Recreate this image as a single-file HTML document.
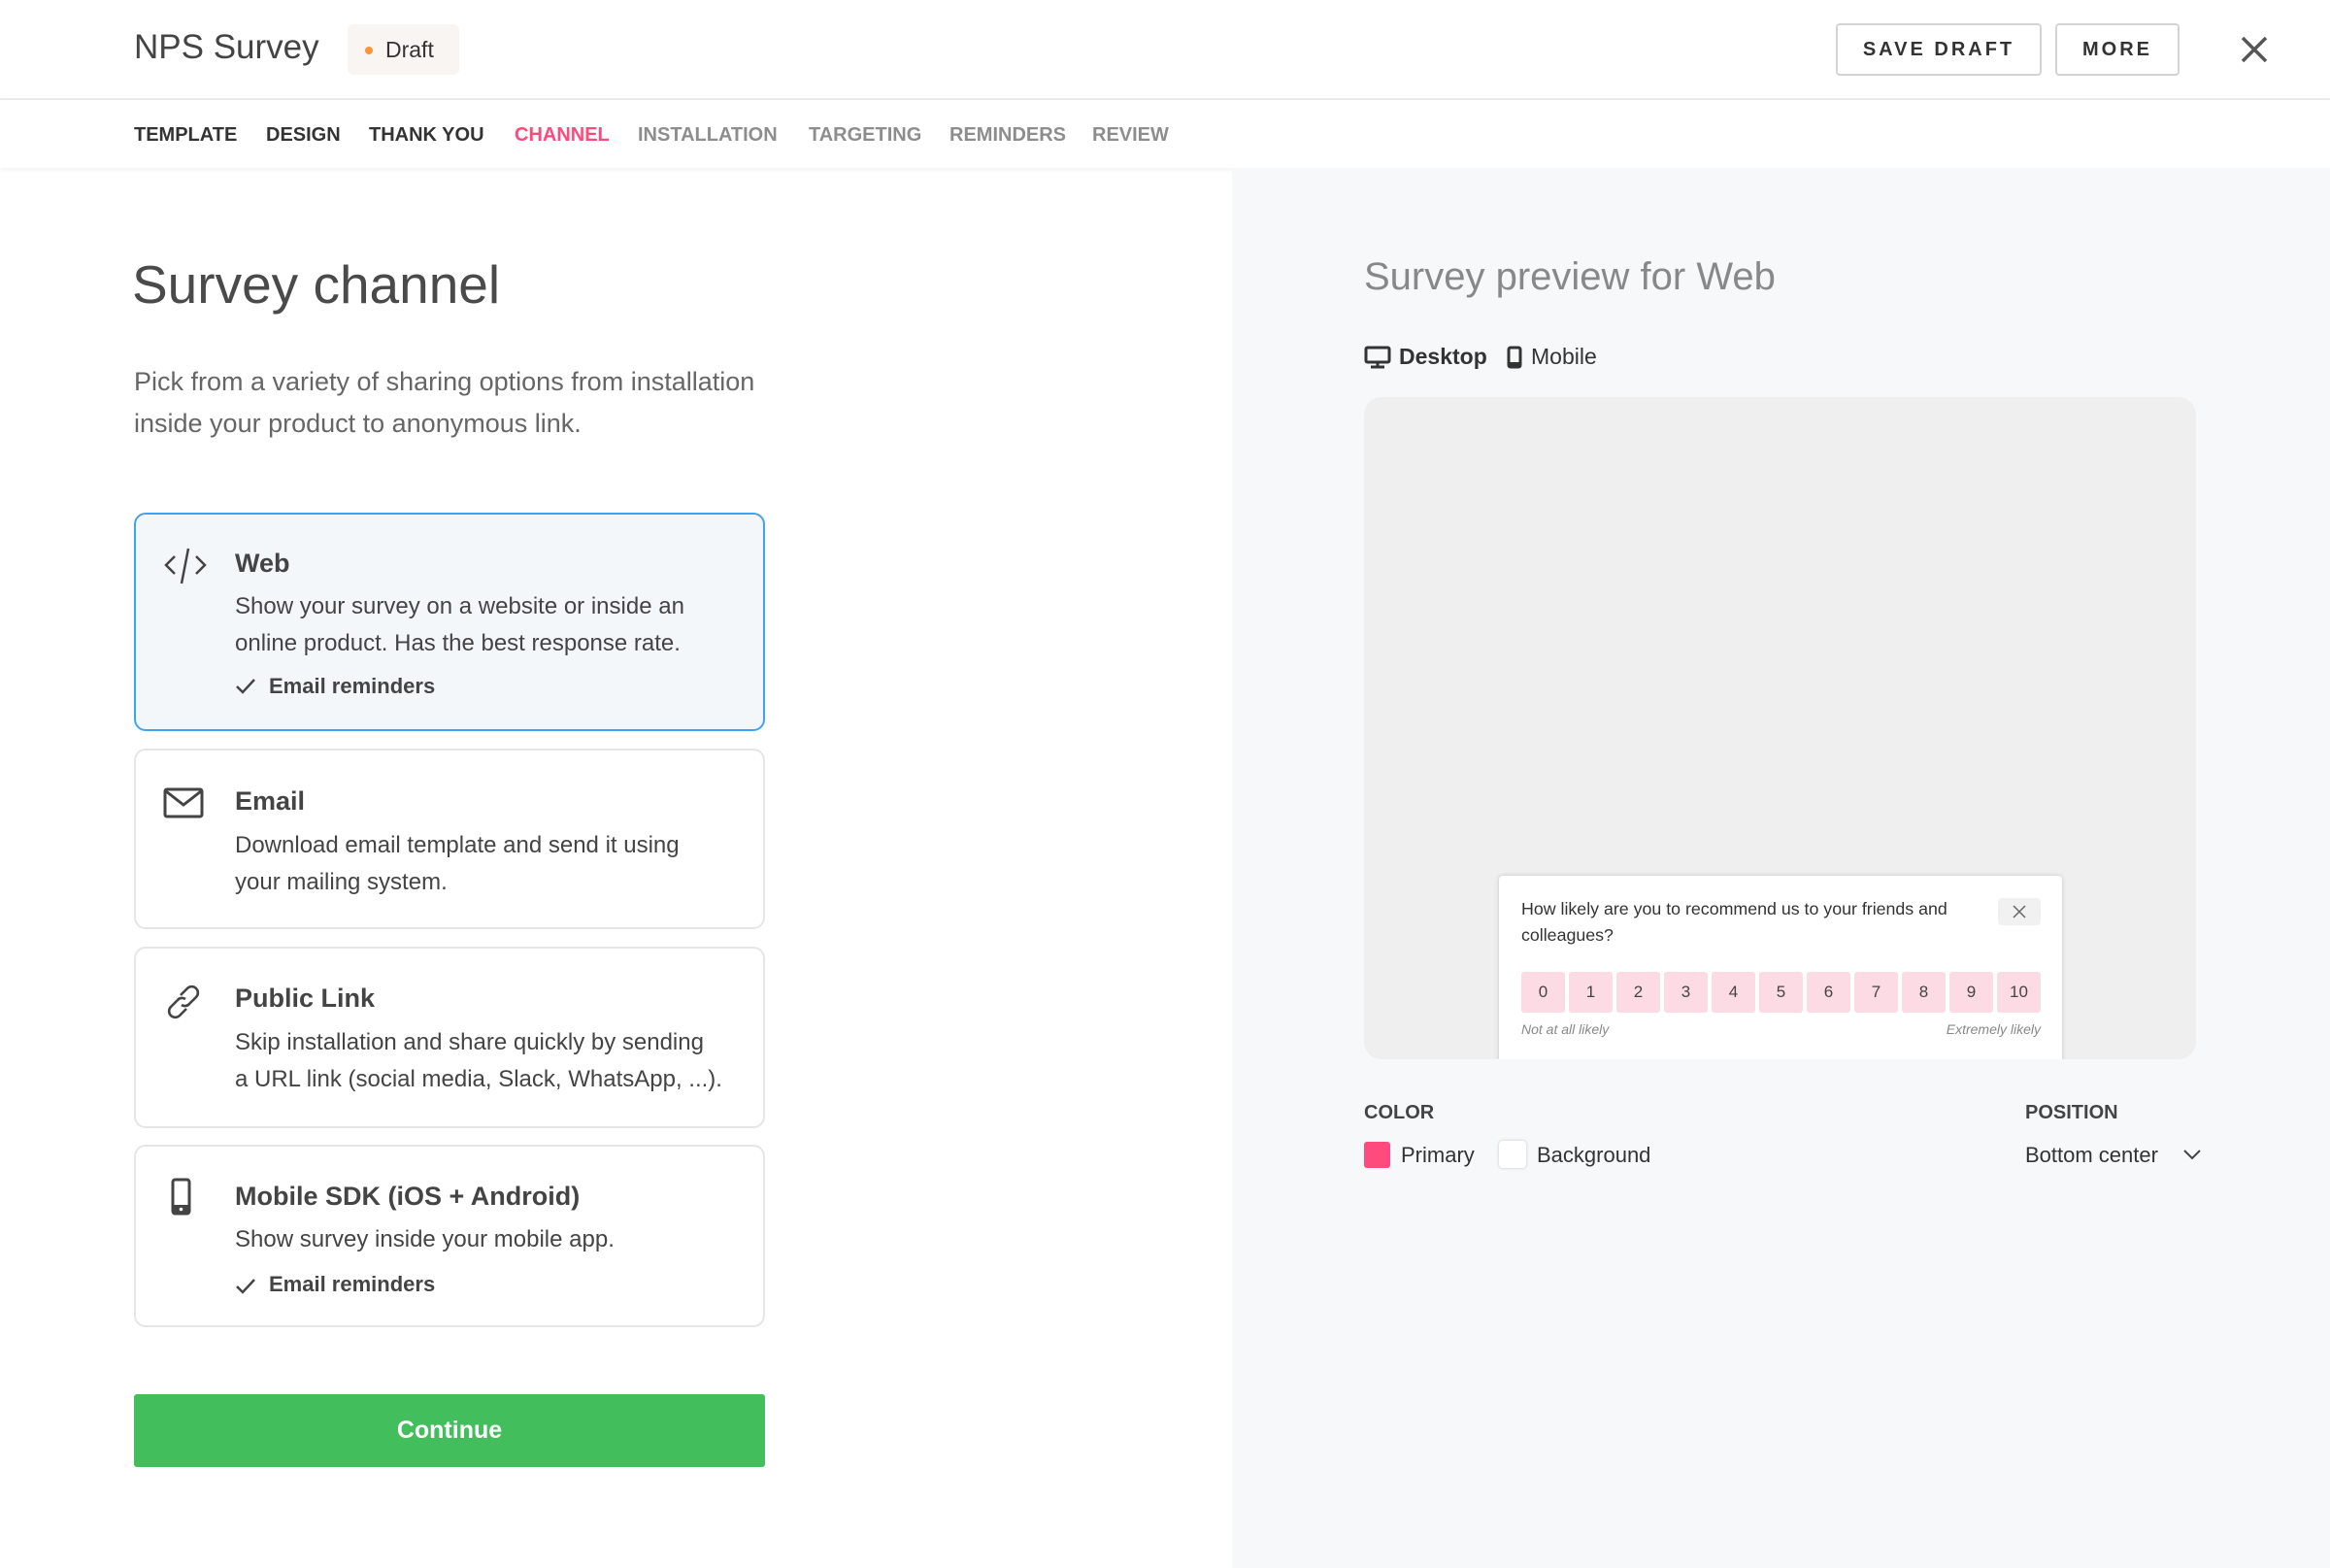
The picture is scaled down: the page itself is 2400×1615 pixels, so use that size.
<!DOCTYPE html>
<html><head><meta charset="utf-8"><style>
*{margin:0;padding:0;box-sizing:border-box}
body{width:2400px;height:1615px;overflow:hidden;background:#fff;font-family:"Liberation Sans",sans-serif;color:#333;position:relative}
.a{position:absolute;white-space:nowrap}
.hdr{position:absolute;left:0;top:0;width:2400px;height:103px;border-bottom:2px solid #ececec;background:#fff}
.nav{position:absolute;left:0;top:103px;width:2400px;height:70px;background:#fff;box-shadow:0 2px 4px rgba(0,0,0,.05)}
.nav span{position:absolute;top:25px;font-size:20px;font-weight:bold;color:#333}
.btn{position:absolute;top:24px;height:54px;border:2px solid #d4d4d4;border-radius:4px;font-size:20px;font-weight:bold;letter-spacing:3px;color:#333;display:flex;align-items:center;justify-content:center;background:#fff}
.right{position:absolute;left:1269px;top:173px;width:1131px;height:1442px;background:#f7f8fa}
.card{position:absolute;left:138px;width:650px;border:2px solid #e6e6e6;border-radius:12px;background:#fff}
.card .t{position:absolute;left:102px;font-size:27px;font-weight:bold;color:#444}
.card .d{position:absolute;left:102px;font-size:24px;line-height:38px;color:#444;white-space:nowrap}
.card .c{position:absolute;left:137px;font-size:22px;font-weight:bold;color:#444}
.card svg.i{position:absolute;left:28px}
.n{position:absolute;top:1001px;width:45px;height:42px;background:#fddbe4;border-radius:3px;font-size:17px;color:#444;display:flex;align-items:center;justify-content:center}
</style></head><body>
<div class="hdr">
<div class="a" style="left:138px;top:29px;font-size:35px;color:#444">NPS Survey</div>
<div class="a" style="left:358px;top:25px;width:115px;height:52px;background:#f9f5f2;border-radius:6px"></div>
<div class="a" style="left:376px;top:48px;width:8px;height:8px;border-radius:50%;background:#f7963a"></div>
<div class="a" style="left:397px;top:38px;font-size:23px;color:#333">Draft</div>
<div class="btn" style="left:1891px;width:212px">SAVE DRAFT</div>
<div class="btn" style="left:2117px;width:128px">MORE</div>
<svg class="a" style="left:2308px;top:37px" width="28" height="28" viewBox="0 0 28 28"><path d="M2 2L26 26M26 2L2 26" stroke="#555" stroke-width="3.5"/></svg>
</div>
<div class="nav">
<span style="left:138px">TEMPLATE</span>
<span style="left:274px">DESIGN</span>
<span style="left:380px">THANK YOU</span>
<span style="left:530px;color:#ff4a7d">CHANNEL</span>
<span style="left:657px;color:#8d8d8d">INSTALLATION</span>
<span style="left:833px;color:#8d8d8d">TARGETING</span>
<span style="left:978px;color:#8d8d8d">REMINDERS</span>
<span style="left:1125px;color:#8d8d8d">REVIEW</span>
</div>
<div class="right"></div>

<div class="a" style="left:136px;top:261px;font-size:55px;color:#4a4a4a">Survey channel</div>
<div class="a" style="left:138px;top:372px;font-size:27px;line-height:43px;color:#666;white-space:normal;width:700px">Pick from a variety of sharing options from installation<br>inside your product to anonymous link.</div>

<div class="card" style="top:528px;height:225px;border-color:#3fa3f3;background:#f4f7fa">
<svg class="i" style="top:32px" width="46" height="42" viewBox="0 0 46 42"><path d="M12 11L3 20L12 29M34 11L43 20L34 29M26 3L19 39" fill="none" stroke="#444" stroke-width="2.5"/></svg>
<div class="t" style="top:35px">Web</div>
<div class="d" style="top:76px">Show your survey on a website or inside an<br>online product. Has the best response rate.</div>
<svg class="a" style="left:102px;top:168px" width="22" height="18" viewBox="0 0 22 18"><path d="M2 9L8 15L20 2" fill="none" stroke="#444" stroke-width="2.5"/></svg>
<div class="c" style="top:164px">Email reminders</div>
</div>

<div class="card" style="top:771px;height:186px">
<svg class="i" style="top:38px" width="42" height="32" viewBox="0 0 42 32"><rect x="2" y="2" width="38" height="28" rx="2" fill="none" stroke="#444" stroke-width="3"/><path d="M3 4L21 18L39 4" fill="none" stroke="#444" stroke-width="3"/></svg>
<div class="t" style="top:37px">Email</div>
<div class="d" style="top:79px">Download email template and send it using<br>your mailing system.</div>
</div>

<div class="card" style="top:975px;height:187px">
<svg class="i" style="top:34px" width="42" height="42" viewBox="0 0 42 42"><g fill="none" stroke="#444" stroke-width="2.6"><path d="M18 14L25 7a6 6 0 0 1 9 9L27 23a6 6 0 0 1-8 1"/><path d="M24 28L17 35a6 6 0 0 1-9-9L15 19a6 6 0 0 1 8-1"/></g></svg>
<div class="t" style="top:36px">Public Link</div>
<div class="d" style="top:78px">Skip installation and share quickly by sending<br>a URL link (social media, Slack, WhatsApp, ...).</div>
</div>

<div class="card" style="top:1179px;height:188px">
<svg class="i" style="top:32px" width="42" height="40" viewBox="0 0 42 40"><rect x="10" y="2" width="17" height="35" rx="2.5" fill="none" stroke="#444" stroke-width="3"/><rect x="10" y="28" width="17" height="9" fill="#444"/><circle cx="18.5" cy="32.5" r="1.8" fill="#fff"/></svg>
<div class="t" style="top:36px">Mobile SDK (iOS + Android)</div>
<div class="d" style="top:77px">Show survey inside your mobile app.</div>
<svg class="a" style="left:102px;top:135px" width="22" height="18" viewBox="0 0 22 18"><path d="M2 9L8 15L20 2" fill="none" stroke="#444" stroke-width="2.5"/></svg>
<div class="c" style="top:129px">Email reminders</div>
</div>

<div class="a" style="left:138px;top:1436px;width:650px;height:75px;background:#42bf5c;border-radius:3px;color:#fff;font-size:25px;font-weight:bold;display:flex;align-items:center;justify-content:center">Continue</div>

<div class="a" style="left:1405px;top:263px;font-size:40px;color:#888">Survey preview for Web</div>
<svg class="a" style="left:1405px;top:356px" width="28" height="24" viewBox="0 0 28 24"><rect x="2" y="2" width="24" height="15" rx="1.5" fill="none" stroke="#333" stroke-width="3"/><path d="M14 17V21M7 22H21" stroke="#333" stroke-width="3"/></svg>
<div class="a" style="left:1441px;top:354px;font-size:23px;font-weight:bold;color:#333">Desktop</div>
<svg class="a" style="left:1552px;top:356px" width="16" height="24" viewBox="0 0 16 24"><rect x="2" y="2" width="12" height="20" rx="2" fill="none" stroke="#333" stroke-width="3"/><rect x="2" y="17" width="12" height="5" fill="#333"/></svg>
<div class="a" style="left:1577px;top:354px;font-size:23px;color:#333">Mobile</div>

<div class="a" style="left:1405px;top:409px;width:857px;height:682px;background:#efefef;border-radius:18px;overflow:hidden">
<div class="a" style="left:139px;top:493px;width:580px;height:200px;background:#fff;border-radius:4px;box-shadow:0 0 5px rgba(0,0,0,.18)"></div>
</div>
<div class="a" style="left:1567px;top:923px;font-size:17.8px;line-height:27px;color:#333;white-space:normal;width:480px">How likely are you to recommend us to your friends and colleagues?</div>
<div class="a" style="left:2058px;top:925px;width:44px;height:28px;background:#f1f1f1;border-radius:4px"></div>
<svg class="a" style="left:2073px;top:932px" width="14" height="14" viewBox="0 0 14 14"><path d="M1 1L13 13M13 1L1 13" stroke="#666" stroke-width="1.5"/></svg>
<div class="n" style="left:1567px">0</div><div class="n" style="left:1616px">1</div><div class="n" style="left:1665px">2</div><div class="n" style="left:1714px">3</div><div class="n" style="left:1763px">4</div><div class="n" style="left:1812px">5</div><div class="n" style="left:1861px">6</div><div class="n" style="left:1910px">7</div><div class="n" style="left:1959px">8</div><div class="n" style="left:2008px">9</div><div class="n" style="left:2057px">10</div>
<div class="a" style="left:1567px;top:1052px;font-size:14px;font-style:italic;color:#888">Not at all likely</div>
<div class="a" style="left:1942px;top:1052px;width:160px;text-align:right;font-size:14px;font-style:italic;color:#888">Extremely likely</div>

<div class="a" style="left:1405px;top:1135px;font-size:20px;font-weight:bold;color:#444">COLOR</div>
<div class="a" style="left:1405px;top:1176px;width:27px;height:27px;background:#ff4a7d;border-radius:3px"></div>
<div class="a" style="left:1443px;top:1177px;font-size:22px;color:#333">Primary</div>
<div class="a" style="left:1544px;top:1175px;width:28px;height:28px;background:#fff;border-radius:4px;box-shadow:0 0 3px rgba(0,0,0,.2)"></div>
<div class="a" style="left:1583px;top:1177px;font-size:22px;color:#333">Background</div>
<div class="a" style="left:2086px;top:1135px;font-size:20px;font-weight:bold;color:#444">POSITION</div>
<div class="a" style="left:2086px;top:1177px;font-size:22px;color:#333">Bottom center</div>
<svg class="a" style="left:2248px;top:1183px" width="20" height="12" viewBox="0 0 20 12"><path d="M2 2L10 10L18 2" fill="none" stroke="#444" stroke-width="2"/></svg>
</body></html>
